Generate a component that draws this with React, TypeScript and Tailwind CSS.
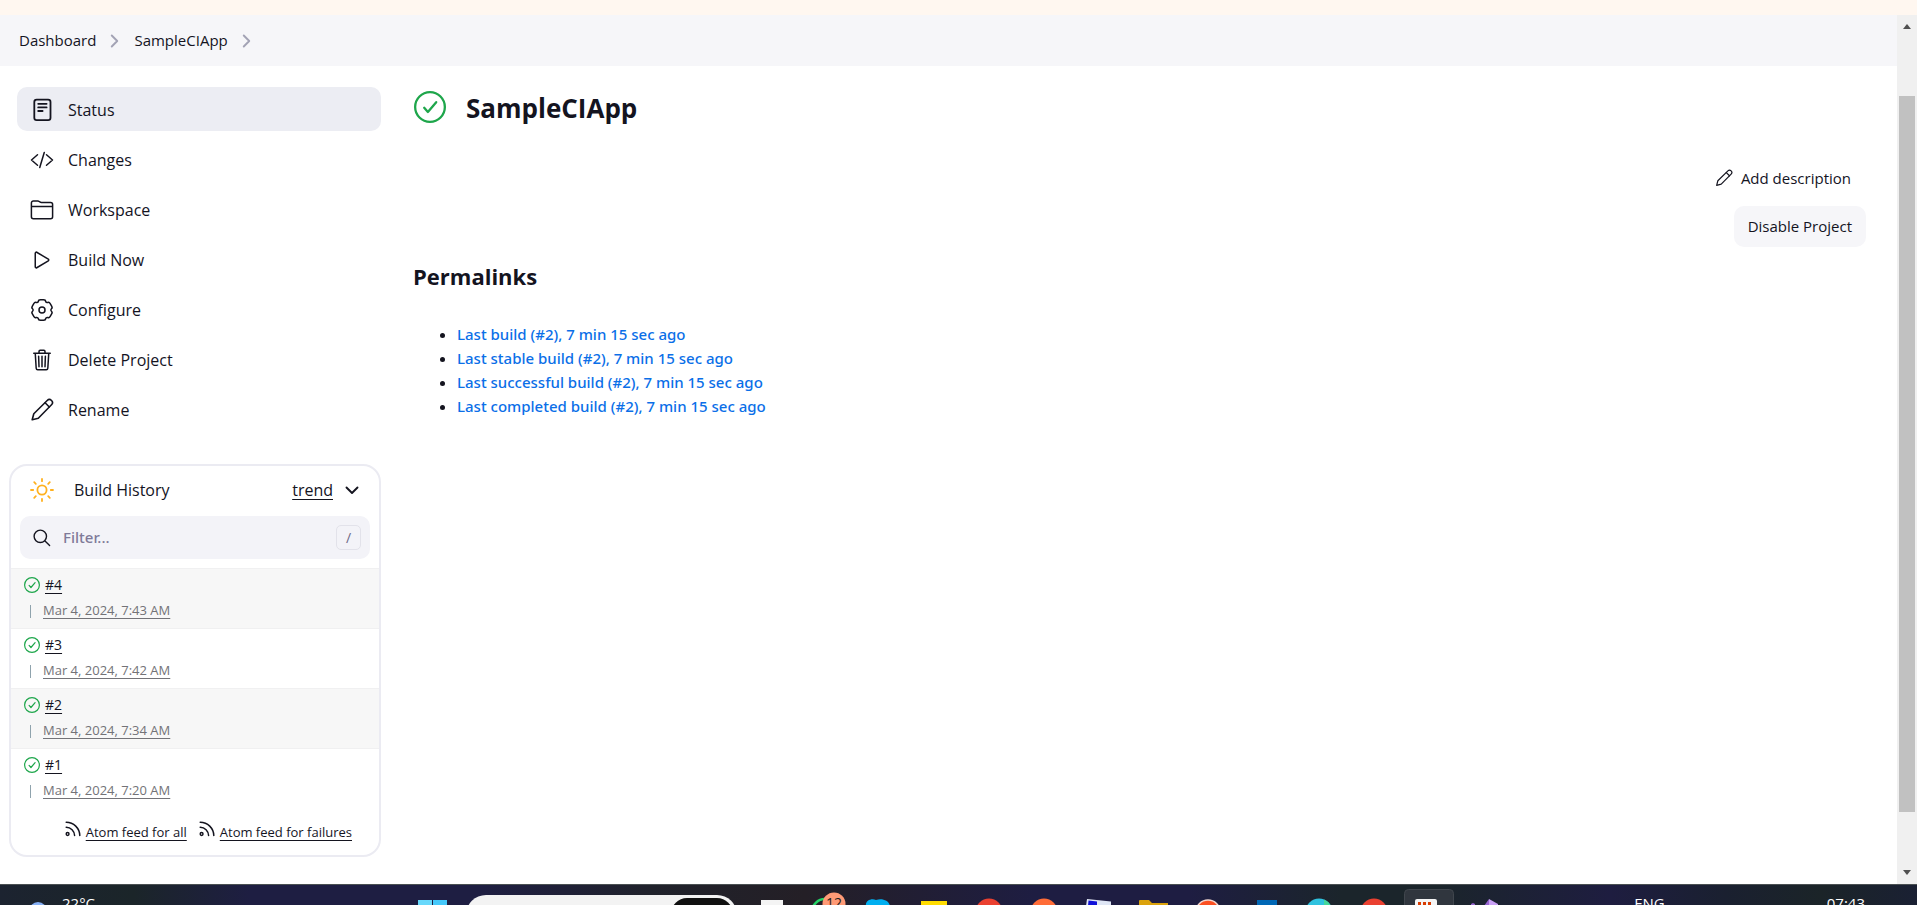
import type { ReactNode } from "react";

function Icon({ children, className, box = 512, stroke = 32 }: { children: ReactNode; className: string; box?: number; stroke?: number }) {
  return (
    <svg
      viewBox={`0 0 ${box} ${box}`}
      className={className}
      fill="none"
      stroke="currentColor"
      strokeWidth={stroke}
      strokeLinecap="round"
      strokeLinejoin="round"
      aria-hidden="true"
    >
      {children}
    </svg>
  );
}

function SuccessIcon({ className, stroke }: { className: string; stroke: number }) {
  return (
    <Icon className={className} box={32} stroke={stroke}>
      <circle cx="16" cy="16" r={16 - stroke / 2} />
      <path d="M10.2 16.8L13.9 21L22.2 11.2" />
    </Icon>
  );
}

function PencilIcon({ className }: { className: string }) {
  return (
    <Icon className={className} box={24} stroke={1.6}>
      <path d="M2.2 21.8L3.8 15.7L17.2 2.5A3 3 0 0 1 21.5 6.8L8.3 20.2Z" />
      <path d="M15.1 4.8L19.3 9" />
    </Icon>
  );
}

function FeedIcon() {
  return (
    <Icon className="size-4 shrink-0 -translate-y-1" box={16} stroke={1.5}>
      <circle cx="2.6" cy="13" r="1.4" />
      <path d="M1.2 6.2A8.6 8.6 0 0 1 9.6 14.6" />
      <path d="M1.2 1.2A13.6 13.6 0 0 1 14.8 14.6" />
    </Icon>
  );
}

function polar(radius: number, degrees: number) {
  const angle = (degrees * Math.PI) / 180;
  return `${(12 + radius * Math.sin(angle)).toFixed(2)} ${(12 - radius * Math.cos(angle)).toFixed(2)}`;
}

// Six rounded teeth: each corner is the control point of a curve between short straight edges.
const gearPath =
  `M${polar(10.4, -8)}` +
  [0, 60, 120, 180, 240, 300]
    .map(
      (tooth) =>
        `L${polar(10.4, tooth + 8)}Q${polar(10.9, tooth + 19)} ${polar(9.5, tooth + 22)}` +
        `Q${polar(8.2, tooth + 30)} ${polar(9.5, tooth + 38)}Q${polar(10.9, tooth + 41)} ${polar(10.4, tooth + 52)}`,
    )
    .join("") +
  "Z";

const tasks: { label: string; icon: ReactNode }[] = [
  {
    label: "Status",
    icon: (
      <Icon className="size-6" box={24} stroke={1.8}>
        <rect x="4.3" y="1.6" width="16.2" height="20.6" rx="2.4" />
        <path d="M8.2 5.8H16.6M8.2 9.4H16.6M8.2 13H12.6" />
      </Icon>
    ),
  },
  {
    label: "Changes",
    icon: (
      <Icon className="size-6">
        <path d="M160 368L32 256l128-112M352 368l128-112-128-112M304 96l-96 320" />
      </Icon>
    ),
  },
  {
    label: "Workspace",
    icon: (
      <Icon className="size-6" box={24} stroke={1.5}>
        <path d="M1.4 5V18.8a2 2 0 0 0 2 2H20.6a2 2 0 0 0 2-2V6.4a2 2 0 0 0-2-2H11.4a3 3 0 0 1-1.6-.5l-.8-.5A2 2 0 0 0 7.9 3H3.4a2 2 0 0 0-2 2ZM1.4 8.5H22.6" />
      </Icon>
    ),
  },
  {
    label: "Build Now",
    icon: (
      <Icon className="size-6">
        <path d="M112 111v290c0 17.44 17 28.52 31 20.16l247.9-148.37c12.12-7.25 12.12-26.33 0-33.58L143 90.84c-14-8.36-31 2.72-31 20.16z" />
      </Icon>
    ),
  },
  {
    label: "Configure",
    icon: (
      <Icon className="size-6" box={24} stroke={1.5}>
        <path d={gearPath} />
        <circle cx="12" cy="12" r="3" />
      </Icon>
    ),
  },
  {
    label: "Delete Project",
    icon: (
      <Icon className="size-6">
        <path d="M112 112l20 320c.95 18.49 14.4 32 32 32h184c17.67 0 30.87-13.51 32-32l20-320M80 112h352M192 112V72a24 24 0 0124-24h80a24 24 0 0124 24v40M256 176v224M184 176l8 224M328 176l-8 224" />
      </Icon>
    ),
  },
  { label: "Rename", icon: <PencilIcon className="size-6" /> },
];

const builds = [
  { id: "#4", date: "Mar 4, 2024, 7:43 AM" },
  { id: "#3", date: "Mar 4, 2024, 7:42 AM" },
  { id: "#2", date: "Mar 4, 2024, 7:34 AM" },
  { id: "#1", date: "Mar 4, 2024, 7:20 AM" },
];

const permalinks = [
  "Last build (#2), 7 min 15 sec ago",
  "Last stable build (#2), 7 min 15 sec ago",
  "Last successful build (#2), 7 min 15 sec ago",
  "Last completed build (#2), 7 min 15 sec ago",
];

function Crumb({ label }: { label: string }) {
  return (
    <li className="flex items-center">
      <a href="#" className="text-[15px]">{label}</a>
      <Icon className="mr-3 ml-2.5 size-4 text-[#a3a3b5]" stroke={60}>
        <path d="M184 80l176 176-176 176" />
      </Icon>
    </li>
  );
}

function BuildHistory() {
  return (
    <section className="mt-[33px] ml-[9px] overflow-hidden rounded-[18px] border-2 border-[#ebebf2] pb-[7px]">
      <div className="flex h-[50px] items-center pr-[18px] pb-0.5 pl-[19px]">
        <svg viewBox="0 0 24 24" className="size-6" fill="none" stroke="#ffb11f" strokeWidth="1.8" strokeLinecap="round" aria-hidden="true">
          <circle cx="12" cy="12" r="4.6" />
          <path d="M12 1v2.2M12 20.8V23M1 12h2.2M20.8 12H23M4.2 4.2l1.6 1.6M18.2 18.2l1.6 1.6M4.2 19.8l1.6-1.6M18.2 5.8l1.6-1.6" />
        </svg>
        <h2 className="ml-5 flex-1 text-base">Build History</h2>
        <a href="#" className="text-base underline underline-offset-[3px]">trend</a>
        <button type="button" aria-label="Collapse build history" className="ml-2.5 flex size-[18px] items-center justify-center">
          <Icon className="size-4" stroke={60}>
            <path d="M80 176l176 176 176-176" />
          </Icon>
        </button>
      </div>
      <div className="mx-[9px] mb-[9px] flex h-[43px] items-center rounded-[10px] bg-[#f3f3f8] pr-[9px] pl-3">
        <Icon className="size-5 shrink-0" box={20} stroke={1.4}>
          <circle cx="8.3" cy="8.3" r="6.2" />
          <path d="M13 13L17.6 17.4" />
        </Icon>
        <input
          type="text"
          aria-label="Filter builds"
          placeholder="Filter..."
          className="ml-[11px] min-w-0 flex-1 bg-transparent font-['Noto_Sans',sans-serif] text-[15px] font-medium outline-none placeholder:text-[#7f7a99]"
        />
        <kbd className="flex size-[25px] items-center justify-center rounded-[5px] border border-[#e2e2ea] font-['Open_Sans',sans-serif] text-sm text-[#6f6a88]">/</kbd>
      </div>
      <table className="w-full">
        <tbody>
          {builds.map((build) => (
            <tr key={build.id} className="h-[60px] border-t border-[#f0f0f1] odd:bg-[#f7f7f7]">
              <td className="pl-[13px] align-top">
                <div className="mt-1 flex h-6 items-center gap-[5px]">
                  <span className="text-[#1ea64b]">
                    <SuccessIcon className="size-4" stroke={2.4} />
                  </span>
                  <a href="#" className="text-sm underline underline-offset-[3px]">{build.id}</a>
                </div>
                <div className="mt-0.5 flex h-6 items-center">
                  <span className="ml-1.5 h-[13px] w-px bg-[#8fa3ad]" />
                  <a href="#" className="ml-3 text-[13px] text-[#737378] underline underline-offset-[3px]">{build.date}</a>
                </div>
              </td>
            </tr>
          ))}
        </tbody>
      </table>
      <div className="mt-[9px] flex h-[30px] items-center justify-end gap-3 pr-[27px] text-[13px]">
        {["Atom feed for all", "Atom feed for failures"].map((label) => (
          <a key={label} href="#" className="flex items-center gap-[5px]">
            <FeedIcon />
            <span className="underline underline-offset-[3px]">{label}</span>
          </a>
        ))}
      </div>
    </section>
  );
}

function Scrollbar() {
  return (
    <div className="flex w-5 shrink-0 flex-col items-center bg-[#f0f0f0]">
      <svg viewBox="0 0 8 5" className="mt-[9px] h-[5px] w-2 fill-[#505050]" aria-hidden="true">
        <path d="M4 0L8 5H0Z" />
      </svg>
      <div className="mt-[67px] mb-[58px] w-4 flex-1 bg-[#c1c1c1]" />
      <svg viewBox="0 0 8 5" className="mb-[9px] h-[5px] w-2 fill-[#505050]" aria-hidden="true">
        <path d="M0 0H8L4 5Z" />
      </svg>
    </div>
  );
}

const apps: { name: string; art: ReactNode }[] = [
  { name: "Task view", art: <path d="M18 16H40V22H18Z" fill="#f4f4f4" /> },
  {
    name: "Messages",
    art: (
      <>
        <circle cx="27" cy="28" r="13" fill="none" stroke="#25d366" strokeWidth="2.5" />
        <circle cx="36" cy="20" r="11.5" fill="#ff9a76" />
      </>
    ),
  },
  { name: "Calls", art: <path d="M13 22C12 17 18 14 23 16C30 14 36 17 37 22Z" fill="#00aff0" /> },
  { name: "Notes", art: <path d="M13 17H39V22H13Z" fill="#ffdc00" /> },
  { name: "Mail", art: <circle cx="26" cy="28" r="13.5" fill="#ea4030" /> },
  { name: "API client", art: <circle cx="26" cy="28" r="13.5" fill="#ff6c37" /> },
  {
    name: "Editor",
    art: (
      <>
        <path d="M14 15L38 17.5V22H13Z" fill="#dfe6f5" />
        <path d="M15.5 16.5L24 17.5V22H15Z" fill="#1010d8" />
      </>
    ),
  },
  { name: "Files", art: <path d="M11 22V17q0-1 1-1h9l3 3h16v3Z" fill="#dba20c" /> },
  { name: "Browser", art: <circle cx="25" cy="28" r="12" fill="#fb5022" stroke="#f3d8d0" strokeWidth="1.5" /> },
  { name: "Photos", art: <path d="M19 16H39V22H19Z" fill="#0067b5" /> },
  {
    name: "Web",
    art: (
      <>
        <circle cx="26" cy="28" r="13.5" fill="#2fc2df" />
        <path d="M31 15.5A13.5 13.5 0 0 1 38 22H31Z" fill="#45d89a" />
      </>
    ),
  },
  { name: "Chrome", art: <circle cx="26" cy="28" r="13.5" fill="#ea4030" /> },
  {
    name: "Jenkins",
    art: (
      <>
        <rect x="1.5" y="5.5" width="49" height="30" rx="4" fill="#30363e" stroke="#40464d" />
        <rect x="12" y="15" width="22" height="12" rx="2" fill="#f4f4f4" />
        <path d="M15 18H18V22H15ZM20 18H23V22H20ZM25 18H28V22H25Z" fill="#d83b01" />
      </>
    ),
  },
  {
    name: "Studio",
    art: (
      <>
        <path d="M26 22L31 15V22Z" fill="#9664cf" />
        <path d="M31 15L40 20V22H31Z" fill="#c9a0f5" />
        <path d="M13 22V20L15 19L17 20V22Z" fill="#9664cf" />
      </>
    ),
  },
];

function Taskbar() {
  return (
    <footer className="flex h-[21px] shrink-0 items-start overflow-hidden border-t border-[#4a5052] bg-[linear-gradient(90deg,#1c2330_0%,#1b2529_7%,#1e1e42_13%,#1e1e42_25%,#20222b_34%,#241f26_42%,#1e1d42_54%,#1e1d42_62%,#1b252b_70%,#1b252b_75%,#1e1d40_84%,#1a2030_90%,#1b2428_95%,#1a2033_100%)] text-[15px] leading-5 text-white">
      <div className="flex w-[418px] shrink-0">
        <svg viewBox="0 0 16 20" className="ml-[30px] h-5 w-4" aria-hidden="true">
          <circle cx="8" cy="26" r="9" fill="#86b0f5" />
        </svg>
        <span className="mt-2 ml-4">22°C</span>
      </div>
      <button type="button" aria-label="Start" className="h-5 w-[30px] shrink-0">
        <svg viewBox="0 0 30 20" className="h-5 w-[30px]" aria-hidden="true">
          <path d="M0 15H14V20H0Z" fill="#68d8fb" />
          <path d="M15 15H29V20H15Z" fill="#45c8fa" />
        </svg>
      </button>
      <div className="mt-2.5 ml-[18px] flex h-10 w-[271px] shrink-0 justify-end rounded-full bg-[#f3f3f3] pt-[3px] pr-1">
        <div className="h-8 w-[62px] rounded-full bg-[#101010]" />
      </div>
      <div className="ml-1.5 flex">
        {apps.map((app) => (
          <button key={app.name} type="button" aria-label={app.name} className="relative h-5 w-[55px] shrink-0">
            <svg viewBox="0 1 55 20" className="h-5 w-[55px]" aria-hidden="true">
              {app.art}
            </svg>
            {app.name === "Messages" && <span className="absolute top-2 left-7 text-sm text-[#1c1c1c]">12</span>}
          </button>
        ))}
      </div>
      <span className="mt-2 ml-auto">ENG</span>
      <span className="mt-2 mr-[52px] ml-[162px]">07:43</span>
    </footer>
  );
}

export default function App() {
  return (
    <div className="flex h-screen flex-col overflow-hidden bg-white font-['Open_Sans','Noto_Sans',sans-serif] text-[#14141f]">
      <div className="h-[15px] shrink-0 bg-[#fff7f0]" />
      <div className="flex min-h-0 flex-1">
        <div className="flex min-w-0 flex-1 flex-col">
          <nav aria-label="Breadcrumb" className="flex h-[51px] shrink-0 items-center bg-[#f6f6f9] pl-[19px]">
            <ol className="flex">
              <Crumb label="Dashboard" />
              <Crumb label="SampleCIApp" />
            </ol>
          </nav>
          <div className="flex flex-1">
            <aside className="w-[381px] shrink-0 pt-[21px]">
              <nav aria-label="Project tasks" className="flex flex-col gap-1.5 pl-[17px]">
                {tasks.map((task, index) => (
                  <a
                    key={task.label}
                    href="#"
                    className={`flex h-11 items-center gap-3.5 rounded-[10px] pt-px pl-[13px] text-base ${index === 0 ? "bg-[#ecedf3]" : ""}`}
                  >
                    {task.icon}
                    {task.label}
                  </a>
                ))}
              </nav>
              <BuildHistory />
            </aside>
            <main className="min-w-0 flex-1 pr-[31px] pl-8">
              <div className="mt-6 flex h-9 items-center gap-[19px]">
                <span className="-mt-0.5 p-px text-[#1ea64b]">
                  <SuccessIcon className="size-8" stroke={2.3} />
                </span>
                <h1 className="text-[26px] font-bold">SampleCIApp</h1>
              </div>
              <div className="mt-8 flex flex-col items-end">
                <button type="button" className="flex h-10 items-center gap-2 pr-[15px] text-[15px]">
                  <PencilIcon className="size-[18px]" />
                  Add description
                </button>
                <button type="button" className="mt-2 h-[41px] rounded-[10px] bg-[#f6f6f9] px-3.5 text-[15px]">
                  Disable Project
                </button>
              </div>
              <h2 className="mt-3 text-[22px] leading-[34px] font-bold">Permalinks</h2>
              <ul className="mt-[29px] list-disc pl-11 font-['Noto_Sans',sans-serif] text-[15px] leading-6">
                {permalinks.map((link) => (
                  <li key={link}>
                    <a href="#" className="font-medium text-[#0b6fe8]">{link}</a>
                  </li>
                ))}
              </ul>
            </main>
          </div>
        </div>
        <Scrollbar />
      </div>
      <Taskbar />
    </div>
  );
}
